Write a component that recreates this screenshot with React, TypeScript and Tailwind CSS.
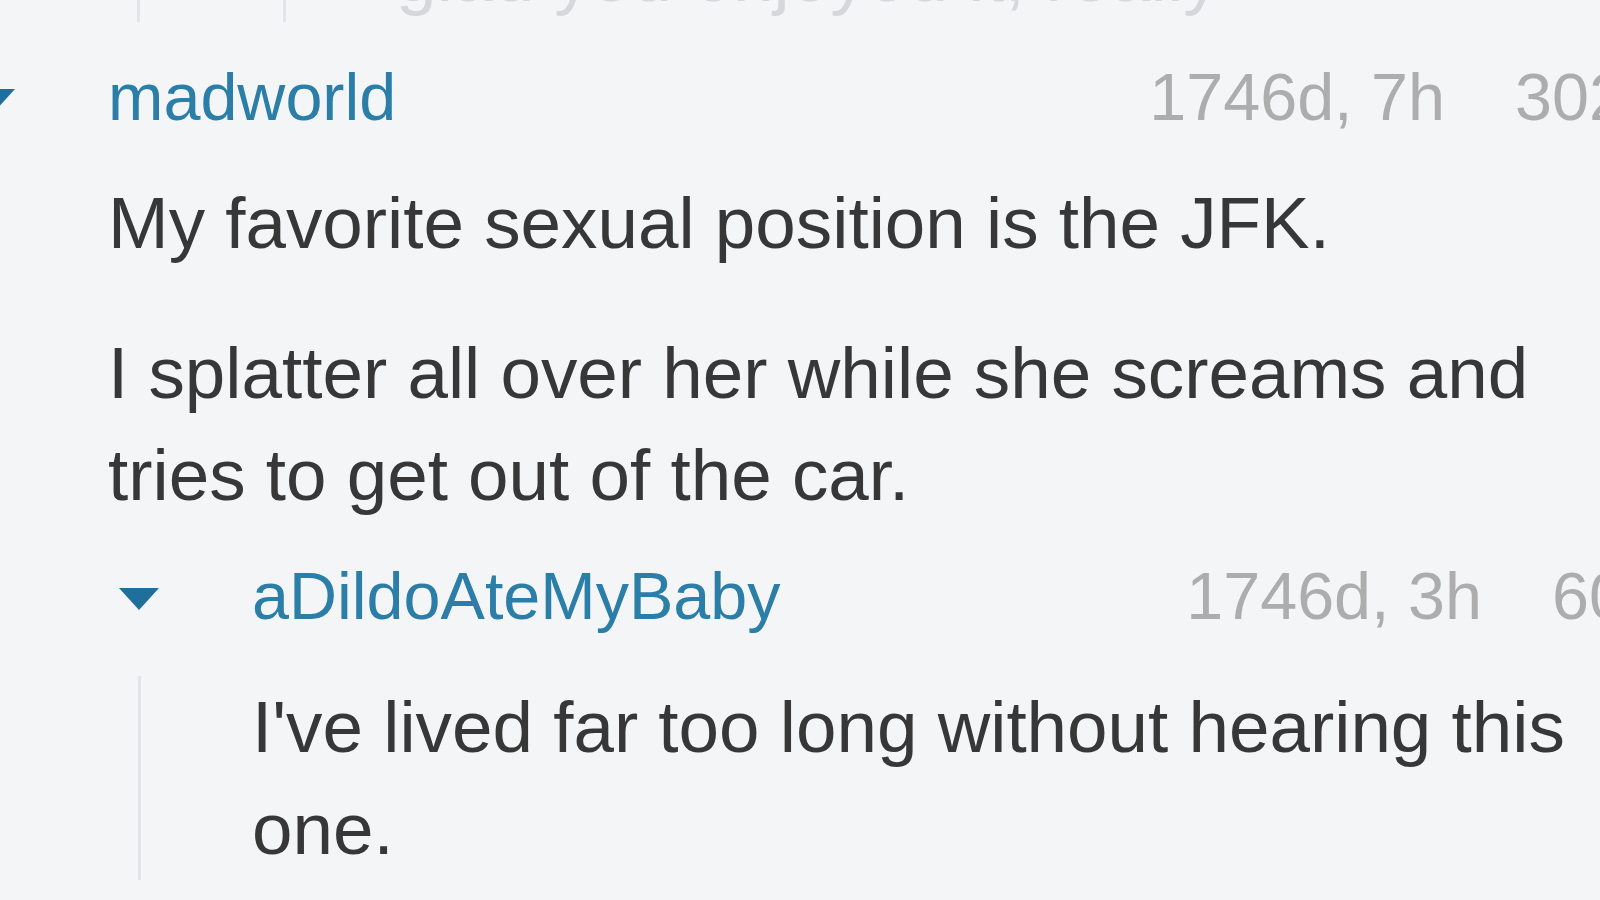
import React from "react";

interface CommentHeaderProps {
  user: string;
  age: string;
  score: string;
}

function Caret() {
  return (
    <svg width="40" height="22" viewBox="0 0 40 22" className="mt-[6px] shrink-0">
      <path d="M0 0 H40 L20 22 Z" fill="#1f6f9c" />
    </svg>
  );
}

function CommentHeader({ user, age, score }: CommentHeaderProps) {
  return (
    <div className="flex items-center h-[66px] text-[66.5px] leading-[66px] whitespace-nowrap">
      <Caret />
      <span className="ml-[93px] text-[#2a7ea7]">{user}</span>
      <div className="flex-1" />
      <span className="text-[#adadad]">{age}</span>
      <span className="ml-[70px] text-[#adadad]">{score}</span>
    </div>
  );
}

export default function App() {
  return (
    <div className="w-[1600px] h-[900px] overflow-hidden bg-[#f4f5f7] font-['Liberation_Sans',Arial,sans-serif] text-[#373737]">
      {/* tail of the thread above, mostly scrolled out */}
      <div className="mt-[-75px] pl-[137px]">
        <div className="border-l-[3px] border-[#e3e4e7] pl-[143px]">
          <div className="border-l-[3px] border-[#e3e4e7] pl-[110px] h-[97px] text-[73px] leading-[102px] text-[#d6d7da] whitespace-nowrap overflow-hidden">
            glad you enjoyed it, really
          </div>
        </div>
      </div>

      {/* madworld */}
      <div className="mt-[42px] ml-[-25px] w-[1651px]">
        <CommentHeader user="madworld" age="1746d, 7h" score="302" />
        <div className="pl-[133px] pr-[26px] text-[72.8px] leading-[102px]">
          <p className="mt-[42px]">My favorite sexual position is the JFK.</p>
          <p className="mt-[48px]">I splatter all over her while she screams and tries to get out of the car.</p>
        </div>

        {/* reply */}
        <div className="mt-[37px] ml-[144px]">
          <CommentHeader user="aDildoAteMyBaby" age="1746d, 3h" score="60" />
          <div className="mt-[47px] ml-[19px] mr-[26px] border-l-[3px] border-[#e3e4e7] pl-[111px] text-[72.8px] leading-[102px]">
            <p>I've lived far too long without hearing this one.</p>
          </div>
        </div>
      </div>
    </div>
  );
}
